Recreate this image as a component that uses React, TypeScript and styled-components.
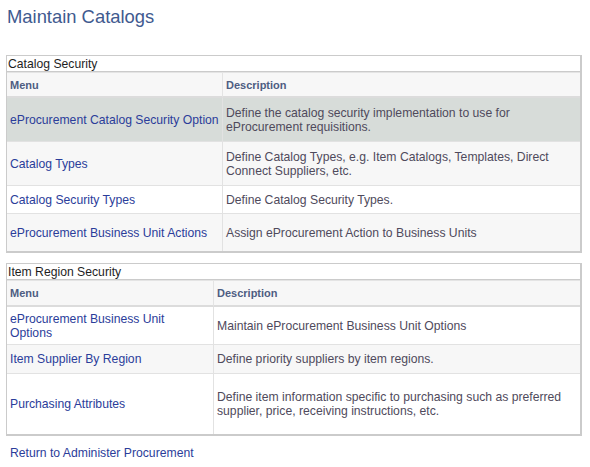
import React from "react";
import styled, { createGlobalStyle } from "styled-components";

type Row = { menu: string; desc: string; h: number; shade?: "plain" | "alt" | "active" };

const catalogRows: Row[] = [
    { menu: "eProcurement Catalog Security Option", desc: "Define the catalog security implementation to use for eProcurement requisitions.", h: 44, shade: "active" },
    { menu: "Catalog Types", desc: "Define Catalog Types, e.g. Item Catalogs, Templates, Direct Connect Suppliers, etc.", h: 44, shade: "alt" },
    { menu: "Catalog Security Types", desc: "Define Catalog Security Types.", h: 28, shade: "plain" },
    { menu: "eProcurement Business Unit Actions", desc: "Assign eProcurement Action to Business Units", h: 37, shade: "alt" },
];

const regionRows: Row[] = [
    { menu: "eProcurement Business Unit Options", desc: "Maintain eProcurement Business Unit Options", h: 38, shade: "plain" },
    { menu: "Item Supplier By Region", desc: "Define priority suppliers by item regions.", h: 29, shade: "alt" },
    { menu: "Purchasing Attributes", desc: "Define item information specific to purchasing such as preferred supplier, price, receiving instructions, etc.", h: 60, shade: "plain" },
];

const App = () => {
    return (
        <Page>
            <GlobalStyle />
            <Title>Maintain Catalogs</Title>
            <MenuTable title="Catalog Security" rows={catalogRows} menuWidth={215} headH={26} gutter={1} />
            <MenuTable title="Item Region Security" rows={regionRows} menuWidth={206} headH={27} gutter={6} />
            <Footer>
                <Link href="#">Return to Administer Procurement</Link>
            </Footer>
        </Page>
    );
};

const MenuTable = ({
    title,
    rows,
    menuWidth,
    headH,
    gutter,
}: {
    title: string;
    rows: Row[];
    menuWidth: number;
    headH: number;
    gutter: number;
}) => (
    <Grid $gutter={gutter}>
        <Caption>{title}</Caption>
        <colgroup>
            <col style={{ width: menuWidth }} />
            <col />
        </colgroup>
        <thead>
            <tr style={{ height: headH }}>
                <Head>Menu</Head>
                <Head>Description</Head>
            </tr>
        </thead>
        <tbody>
            {rows.map((r) => (
                <Line key={r.menu} $shade={r.shade || "plain"} style={{ height: r.h }}>
                    <Cell>
                        <Link href="#">{r.menu}</Link>
                    </Cell>
                    <Cell>{r.desc}</Cell>
                </Line>
            ))}
        </tbody>
    </Grid>
);

export default App;

const GlobalStyle = createGlobalStyle`
    body {
        margin: 0;
        background: #ffffff;
        font-family: "Liberation Sans", Arial, sans-serif;
    }
`;

const Page = styled.div`
    width: 590px;
    padding: 0 8px 0 6px;
    box-sizing: border-box;
`;

const Title = styled.h1`
    margin: 0;
    padding: 6px 0 0 1px;
    height: 55px;
    box-sizing: border-box;
    font-size: 18.4px;
    font-weight: normal;
    color: #3f5a8f;
`;

const Grid = styled.table<{ $gutter: number }>`
    width: 576px;
    table-layout: fixed;
    border-collapse: separate;
    border-spacing: 0;
    border: 1px solid #cbcbcb;
    border-right-width: 2px;
    border-bottom-width: 2px;
    margin-bottom: 10px;
    font-size: 12.2px;
    line-height: 14px;
    td {
        padding-right: ${(p) => p.$gutter}px;
    }
`;

const Caption = styled.caption`
    caption-side: top;
    text-align: left;
    border: 1px solid #cbcbcb;
    border-bottom: none;
    border-right-width: 2px;
    height: 16px;
    padding: 1px 0 0 1px;
    box-sizing: border-box;
    font-size: 12.2px;
    line-height: 14px;
    color: #1e1e1e;
    background: #ffffff;
`;

const Head = styled.th`
    text-align: left;
    padding: 0 3px;
    font-size: 11px;
    font-weight: bold;
    color: #4e5d82;
    background: #f7f7f7;
    border-top: 1px solid #e4e4e4;
    border-bottom: 2px solid #dcdcdc;
    border-left: 1px solid #e4e4e4;
    &:first-child {
        border-left: none;
    }
`;

const shades = {
    plain: "#ffffff",
    alt: "#f7f7f7",
    active: "#d7dcd9",
};

const Line = styled.tr<{ $shade: "plain" | "alt" | "active" }>`
    background: ${(p) => shades[p.$shade]};
`;

const Cell = styled.td`
    padding-left: 3px;
    padding-top: 0;
    padding-bottom: 0;
    vertical-align: middle;
    color: #4f4a5c;
    border-bottom: 1px solid #e2e2e2;
    border-left: 1px solid #e2e2e2;
    &:first-child {
        border-left: none;
    }
    tr:last-child & {
        border-bottom: none;
    }
`;

const Link = styled.a`
    color: #2b3d9a;
    text-decoration: none;
`;

const Footer = styled.div`
    padding: 0 0 0 4px;
    font-size: 12.2px;
`;
